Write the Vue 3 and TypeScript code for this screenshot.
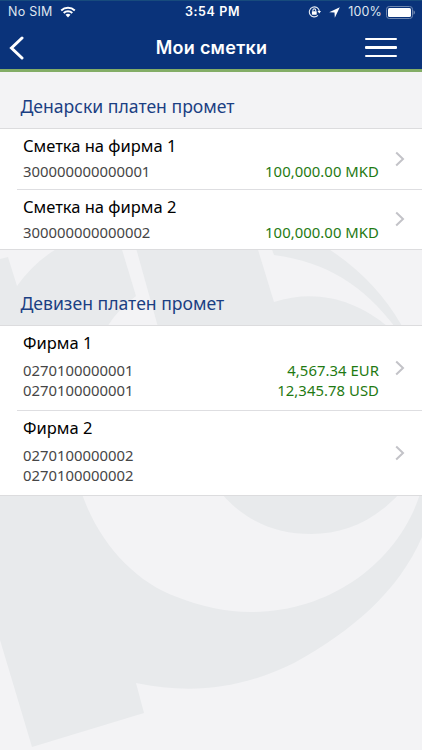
<script setup lang="ts">
interface Account {
  number: string
  amount?: string
}

interface Holder {
  name: string
  accounts: Account[]
}

interface Section {
  title: string
  kind: 'domestic' | 'foreign'
  holders: Holder[]
}

const sections: Section[] = [
  {
    title: 'Денарски платен промет',
    kind: 'domestic',
    holders: [
      { name: 'Сметка на фирма 1', accounts: [{ number: '300000000000001', amount: '100,000.00 MKD' }] },
      { name: 'Сметка на фирма 2', accounts: [{ number: '300000000000002', amount: '100,000.00 MKD' }] },
    ],
  },
  {
    title: 'Девизен платен промет',
    kind: 'foreign',
    holders: [
      {
        name: 'Фирма 1',
        accounts: [
          { number: '0270100000001', amount: '4,567.34 EUR' },
          { number: '0270100000001', amount: '12,345.78 USD' },
        ],
      },
      {
        name: 'Фирма 2',
        accounts: [{ number: '0270100000002' }, { number: '0270100000002' }],
      },
    ],
  },
]
</script>

<template>
  <div class="screen">
    <svg class="watermark" viewBox="0 0 422 750" aria-hidden="true">
      <path
        class="ink"
        d="M0 259 L8 257 L17 286 Q34 262 58 248 L324 246 Q374 277 402 326 L422 480 L422 537 C398 592 352 631 294 663 C239 690 190 694 136 683 L144 713 L32 747 L0 640 Z"
      />
      <path class="paper" d="M121.500 248 L136 248 L158 327 L107 327 Q118 309 136 296 Z" />
      <path class="paper" d="M257.500 248 L271.500 248 L274 255 C327 262 364 286 395 327 L388 327 C355 299 315 289 274 302 Z" />
      <path
        class="paper"
        d="M82 494 C99 543 135 582 177 597 C200 606 226 612 251 612 C333 612 399 560 420 494 L399 494 C373 522 343 534 311 534 C277 534 246 522 222 494 Z"
      />
      <path class="paper" d="M402 326 L422 326 L422 480 Z" />
    </svg>

    <header class="header">
      <div class="status">
        <div class="status-left">
          <span class="carrier">No SIM</span>
          <svg class="wifi" width="16" height="12" viewBox="0 0 16 12">
            <path d="M1.200 4.400 A10 10 0 0 1 14.800 4.400" />
            <path d="M3.700 7 A6.300 6.300 0 0 1 12.300 7" />
            <path class="solid" d="M5.500 8.800 A3.800 3.800 0 0 1 10.500 8.800 L8 11.400 Z" />
          </svg>
        </div>
        <span class="clock">3:54 PM</span>
        <div class="status-right">
          <svg class="lock" width="13" height="12" viewBox="0 0 13 12">
            <path class="ring" d="M11.300 5.200 A5 5 0 1 0 9.900 9.400" />
            <path class="fill" d="M9.500 5.100 H13 L11.300 7.500 Z" />
            <rect class="fill" x="3.900" y="5.200" width="4.800" height="3.500" rx="0.400" />
            <path class="ring" d="M4.900 5.400 V4.300 A1.400 1.400 0 0 1 7.700 4.300 V5.400" />
          </svg>
          <svg class="arrow" width="11" height="11" viewBox="0 0 11 11">
            <path d="M10.800 0.200 L0.200 5.200 L5.500 5.500 L5.800 10.800 Z" />
          </svg>
          <span class="percent">100%</span>
          <svg class="battery" width="29" height="13" viewBox="0 0 29 13">
            <rect class="shell" x="0.500" y="0.500" width="26" height="12" rx="2.800" />
            <rect class="charge" x="2" y="2" width="23" height="9" rx="1.500" />
            <path class="cap" d="M27.500 4.300 Q29 5 29 6.500 Q29 8 27.500 8.700 Z" />
          </svg>
        </div>
      </div>
      <nav class="nav">
        <button class="back" aria-label="Назад">
          <svg width="16" height="24" viewBox="0 0 16 24"><path d="M13 2 L2.500 12 L13 22" /></svg>
        </button>
        <h1 class="title">Мои сметки</h1>
        <button class="menu" aria-label="Мени"><i /><i /><i /></button>
      </nav>
    </header>

    <main>
      <section v-for="section in sections" :key="section.title" :class="section.kind">
        <h2 class="heading"><span>{{ section.title }}</span></h2>
        <ul class="list">
          <li v-for="holder in section.holders" :key="holder.name" class="row">
            <div class="details">
              <span class="name">{{ holder.name }}</span>
              <div class="accounts">
                <div v-for="(account, i) in holder.accounts" :key="i" class="account">
                  <span>{{ account.number }}</span>
                  <span v-if="account.amount" class="amount">{{ account.amount }}</span>
                </div>
              </div>
            </div>
            <svg class="chevron" width="10" height="16" viewBox="0 0 10 16"><path d="M1.200 1.500 L8 8 L1.200 14.500" /></svg>
          </li>
        </ul>
      </section>
    </main>
  </div>
</template>

<style>
body {
  margin: 0;
  background: #f3f3f5;
}
</style>

<style scoped>
.screen {
  position: relative;
  width: 422px;
  height: 750px;
  overflow: hidden;
  background: #f3f3f5;
  font-family: "Noto Sans", "Open Sans", sans-serif;
}
.watermark {
  position: absolute;
  inset: 0;
  width: 422px;
  height: 750px;
}
.ink { fill: #e8eaec; }
.paper { fill: #f3f3f5; }

.header {
  position: relative;
  box-sizing: border-box;
  height: 72px;
  background: #0a337a;
  border-top: 1px solid #174b7d;
  border-bottom: 3px solid #83ad66;
  color: #fff;
  font-family: Inter, "Liberation Sans", sans-serif;
}
.status {
  display: grid;
  grid-template-columns: 1fr auto 1fr;
  align-items: center;
  height: 22px;
  padding: 0 7px 0 8px;
  font-size: 12.500px;
  line-height: 22px;
}
.status-left,
.status-right {
  display: flex;
  align-items: center;
}
.status-left { gap: 7px; }
.carrier { letter-spacing: 0.250px; color: #dfe5ef; }
.status-right { justify-content: flex-end; }
.clock { margin-left: 2px; font-weight: 600; letter-spacing: 0.600px; }
.wifi path { fill: none; stroke: #fff; stroke-width: 2; }
.wifi .solid { fill: #fff; stroke: none; }
.lock { margin-right: 8px; }
.ring { fill: none; stroke: #e6ebf3; stroke-width: 1.100; }
.fill { fill: #fff; }
.arrow { margin-right: 8px; fill: #fff; }
.percent { margin-right: 4px; color: #dfe5ef; letter-spacing: 0.150px; }
.shell { fill: none; stroke: #7088b0; }
.charge { fill: #fff; }
.cap { fill: #7088b0; }

.nav {
  display: grid;
  grid-template-columns: 1fr auto 1fr;
  align-items: center;
  height: 46px;
  padding: 3px 25px 0 9px;
  box-sizing: border-box;
}
.nav button {
  padding: 0;
  border: 0;
  background: none;
}
.back { display: flex; }
.back path {
  fill: none;
  stroke: #fff;
  stroke-width: 3;
  stroke-linecap: round;
}
.title {
  margin: 1px 0 0 17px;
  font-size: 18px;
  font-weight: 600;
  letter-spacing: 0.250px;
  line-height: 24px;
}
.nav .menu {
  display: flex;
  flex-direction: column;
  justify-self: end;
  gap: 6px;
  width: 32px;
}
.menu i {
  height: 2.600px;
  border-radius: 1px;
  background: #fff;
}

.heading {
  display: flex;
  box-sizing: border-box;
  align-items: flex-end;
  margin: 0;
  padding: 0 20.500px 11px;
  color: #1b3f83;
  font-size: 17.600px;
  font-weight: 400;
  line-height: 22px;
}
.domestic .heading { height: 56px; }
.foreign .heading { height: 75px; }
main {
  position: relative;
}
.list {
  margin: 0;
  padding: 0;
  border-top: 1px solid #dcdcde;
  border-bottom: 1px solid #dcdcde;
  background: #fff;
  list-style: none;
}
.row {
  display: flex;
  box-sizing: border-box;
  align-items: center;
  justify-content: space-between;
  margin-left: 17px;
  padding: 0 17px 0 6px;
}
.row + .row { border-top: 1px solid #dedee1; }
.domestic .row { height: 60px; }
.foreign .row { height: 84px; }
.foreign .row + .row { height: 85px; }
.details {
  align-self: flex-start;
  width: 356px;
  padding-top: 6px;
}
.name {
  display: block;
  color: #000;
  font-size: 16.500px;
  line-height: 22px;
}
.account {
  display: flex;
  justify-content: space-between;
  color: #464646;
  font-size: 14.850px;
  line-height: 20.300px;
}
.domestic .accounts { margin-top: 4px; }
.foreign .accounts { margin-top: 6px; }
.amount { color: #1f7a12; letter-spacing: 0.050px; }
.chevron { margin-bottom: 1px; }
.chevron path {
  fill: none;
  stroke: #c3c3c8;
  stroke-width: 2;
}
</style>
